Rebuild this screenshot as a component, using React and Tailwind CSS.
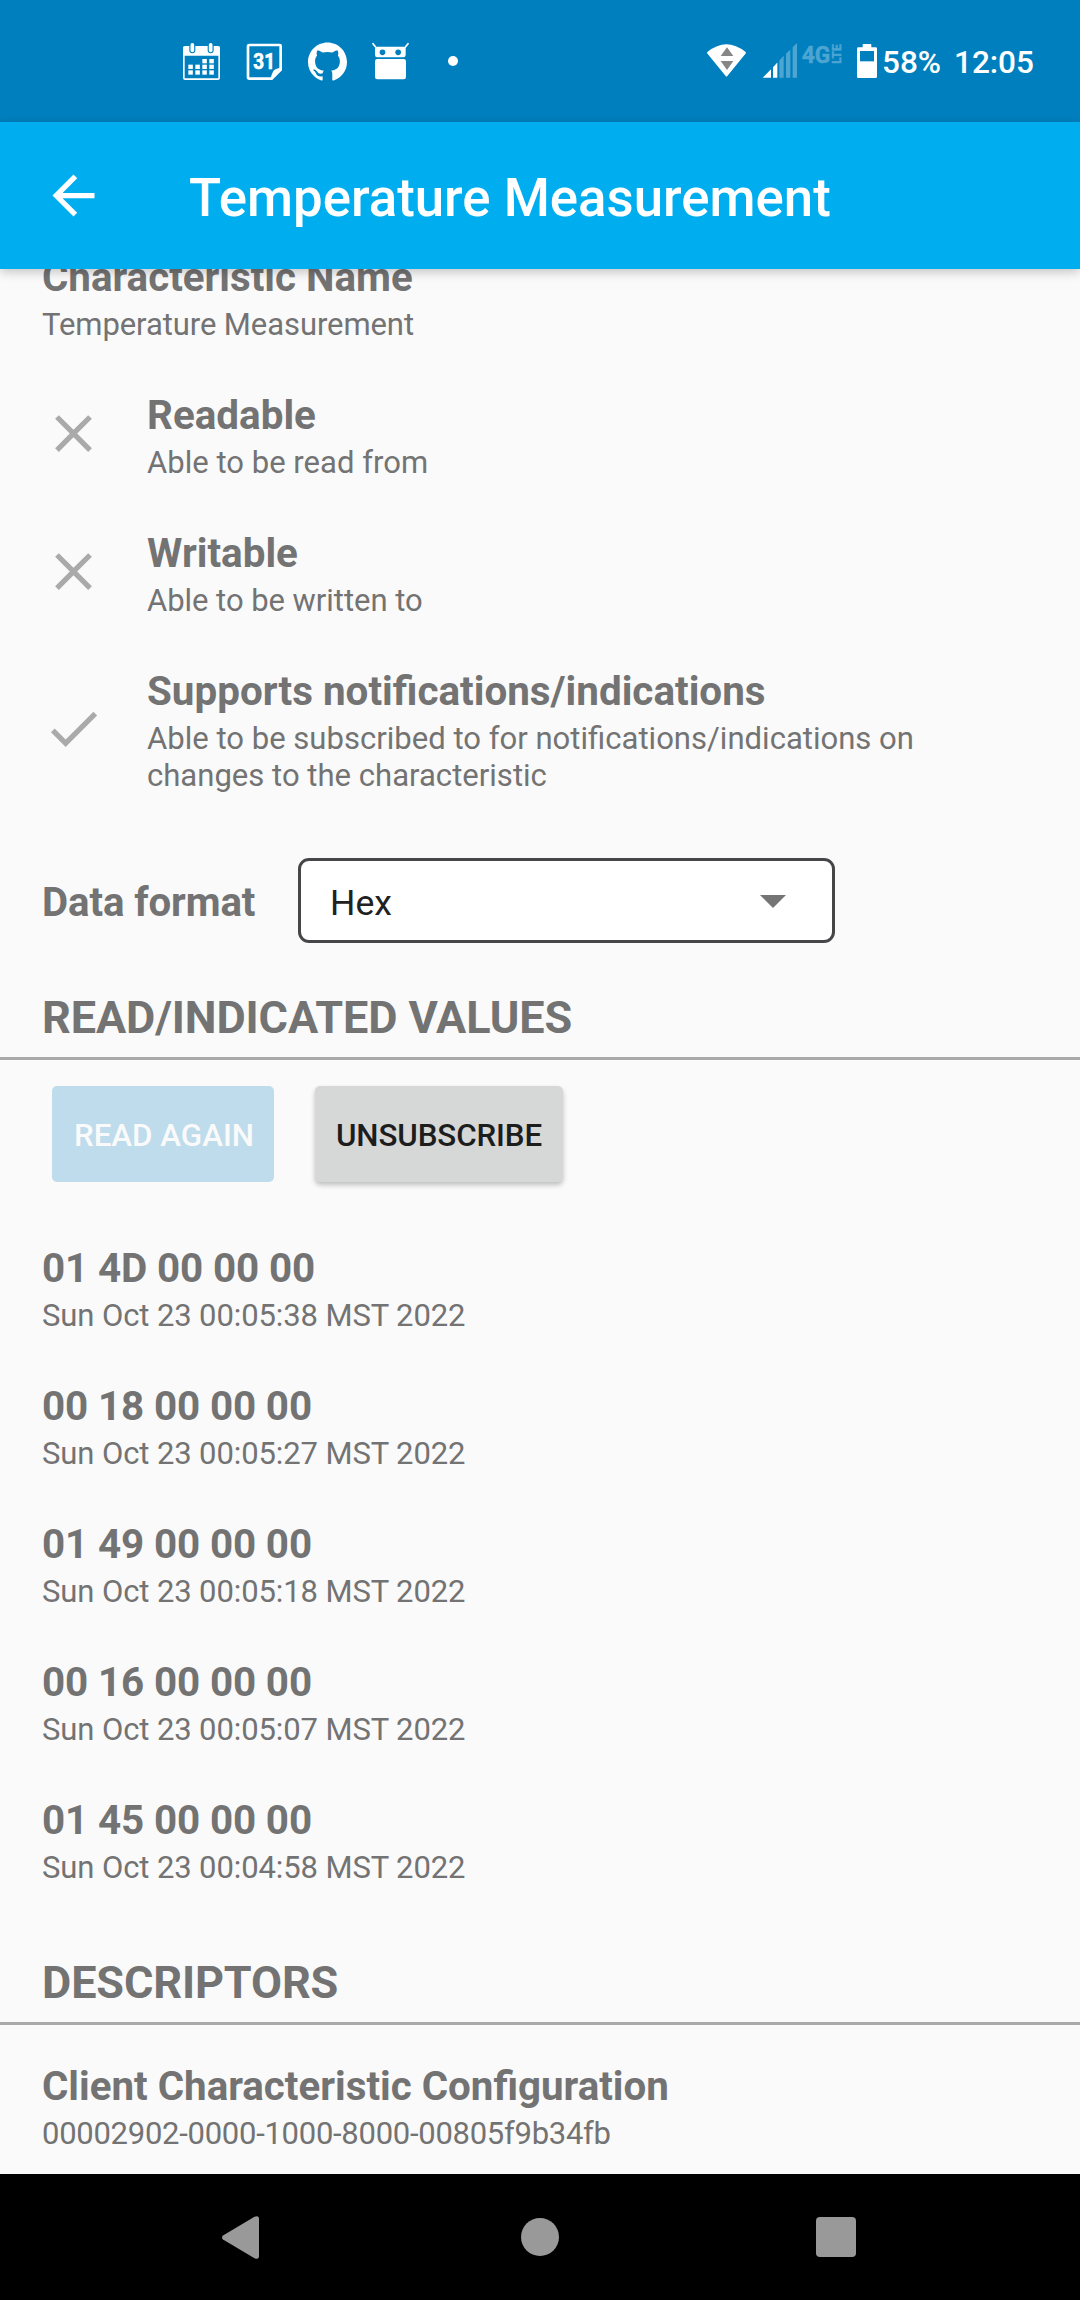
import React from 'react';
import { MdArrowBack, MdCheck, MdClose } from 'react-icons/md';
import { SiGithub } from 'react-icons/si';

const properties = [
  { icon: MdClose, title: 'Readable', text: 'Able to be read from', textClass: 'text-[31px] tracking-[0.03px]' },
  { icon: MdClose, title: 'Writable', text: 'Able to be written to', textClass: 'text-[31px] tracking-[-0.04px]' },
  {
    icon: MdCheck,
    title: 'Supports notifications/indications',
    text: 'Able to be subscribed to for notifications/indications on changes to the characteristic',
    textClass: 'text-[31.07px]',
  },
];

const values = [
  ['01 4D 00 00 00', 'Sun Oct 23 00:05:38 MST 2022'],
  ['00 18 00 00 00', 'Sun Oct 23 00:05:27 MST 2022'],
  ['01 49 00 00 00', 'Sun Oct 23 00:05:18 MST 2022'],
  ['00 16 00 00 00', 'Sun Oct 23 00:05:07 MST 2022'],
  ['01 45 00 00 00', 'Sun Oct 23 00:04:58 MST 2022'],
];

const calendarCells = [
  [127, 117], [148, 117],
  [85, 134], [106, 134], [127, 134], [148, 134],
  [85, 151], [106, 151], [127, 151], [148, 151],
];

function CalendarIcon() {
  return (
    <svg className="h-[38px] w-[37px]" viewBox="69 66 111 114">
      <rect x="71.5" y="80.5" width="106" height="97" rx="4" fill="none" stroke="#fff" strokeWidth="5" />
      <path d="M70 80h109v27H70z" fill="#fff" />
      {[97, 152].map((x) => (
        <g key={x}>
          <rect x={x - 9} y="68" width="18" height="32" rx="9" fill="#007fbe" />
          <rect x={x - 5.5} y="69" width="11" height="28" rx="5.5" fill="#fff" />
        </g>
      ))}
      {calendarCells.map(([x, y]) => (
        <rect key={`${x}-${y}`} x={x} y={y} width="13.5" height="13" fill="#fff" />
      ))}
    </svg>
  );
}

function DateIcon() {
  return (
    <svg className="h-[38px] w-[36px]" viewBox="258 66 108 114">
      <path d="M268 75h91q3 0 3 3v71l-27 27h-67q-4 0-4-4V79q0-4 4-4z" fill="none" stroke="#fff" strokeWidth="8" />
      <path d="M364 143q-20 3-24 10t-9 23l6 2 27-27z" fill="#fff" />
      <text x="280" y="147" textLength="65" lengthAdjust="spacingAndGlyphs" fill="#fff" stroke="#fff" strokeWidth="2" className="font-['Roboto',sans-serif] text-[68px] font-bold">31</text>
    </svg>
  );
}

function RobotIcon() {
  return (
    <svg className="h-[38px] w-[37px]" viewBox="636 66 111 114">
      <path d="M639 71l11 14M744 71l-11 14" stroke="#fff" strokeWidth="5" strokeLinecap="round" />
      <path d="M652 80h78q7 0 7 8v17q0 7-7 7h-78q-7 0-7-7V88q0-8 7-8z" fill="#fff" />
      <circle cx="667.5" cy="97" r="8.5" fill="#007fbe" />
      <circle cx="714.5" cy="97" r="8.5" fill="#007fbe" />
      <rect x="645" y="117" width="93" height="61" rx="7" fill="#fff" />
    </svg>
  );
}

function WifiIcon() {
  return (
    <svg className="h-[38px] w-[39px]" viewBox="51 66 117 114">
      <path d="M53 95.500Q109 50 166 95.500q3 2 1 5L112 168q-3 3-5 0L52 100.500q-2-3 1-5z" fill="#fff" />
      <path d="M92 108h38l-19-26zM92 123h38l-19 27z" fill="#868686" />
    </svg>
  );
}

function SignalIcon() {
  return (
    <svg className="h-[38px] w-[36px]" viewBox="216 66 108 114">
      <path d="M218 173.500l25-26v26zM249 173.500v-32l13-14v46z" fill="#fff" />
      <path d="M268 173.500v-52l13-14v66zM288 173.500v-72l13-13v85zM308 173.500V82l13-13v104.500z" fill="#4da5d2" />
    </svg>
  );
}

function NetworkIcon() {
  return (
    <svg className="h-[38px] w-[41px] overflow-visible" viewBox="333 66 123 114" fill="#4da5d2" stroke="#4da5d2" strokeWidth="1.5">
      <text x="335" y="129" textLength="86" lengthAdjust="spacingAndGlyphs" className="font-['Roboto',sans-serif] text-[74px] font-bold">4G</text>
      <text transform="translate(453 131) rotate(-90)" textLength="58" lengthAdjust="spacingAndGlyphs" className="font-['Roboto',sans-serif] text-[36px] font-bold">LTE</text>
    </svg>
  );
}

function BatteryIcon() {
  return (
    <svg className="h-[38px] w-[22px]" viewBox="498 66 66 114">
      <path d="M520 72h22q2 0 2 2v8h13q4 0 4 4v84q0 4-4 4h-52q-4 0-4-4V86q0-4 4-4h13v-8q0-2 2-2z" fill="#fff" />
      <path d="M510 93h42v31h-42z" fill="#007fbe" />
    </svg>
  );
}

function StatusBar() {
  return (
    <div className="flex h-[122px] shrink-0 items-center bg-[#007fbe] pl-[183px] text-[31.5px] font-medium text-white">
      <div className="flex items-center">
        <CalendarIcon />
        <span className="w-[26px]" />
        <DateIcon />
        <span className="w-[26px]" />
        <SiGithub className="size-[39px]" />
        <span className="w-[25px]" />
        <RobotIcon />
        <span className="ml-[39px] size-[10px] rounded-full bg-white" />
      </div>
      <div className="ml-[249px] flex items-center">
        <WifiIcon />
        <span className="w-[16px]" />
        <SignalIcon />
        <span className="w-[3px]" />
        <NetworkIcon />
        <span className="w-[14px]" />
        <BatteryIcon />
        <span className="ml-[4px] w-[72px] pt-[3px]">58%</span>
        <span className="pt-[3px]">12:05</span>
      </div>
    </div>
  );
}

function AppBar() {
  return (
    <header className="relative z-10 flex h-[147px] shrink-0 items-center gap-[84px] bg-[#00aef0] pl-[42px] text-white shadow-[0_3px_10px_rgba(0,0,0,0.22)]">
      <MdArrowBack className="size-[63px]" />
      <h1 className="pt-[5px] text-[52.8px] leading-none font-medium">Temperature Measurement</h1>
    </header>
  );
}

function Item({ icon: Icon, title, text, titleClass = 'text-[40.4px]', textClass = 'text-[31px]' }) {
  return (
    <div className="flex items-center gap-[42px] px-[42px] py-6">
      {Icon && <Icon className="mb-[5px] size-[63px] shrink-0 text-[#aaaaaa]" />}
      <div className="flex max-w-[800px] flex-col gap-[3px]">
        <div className={`leading-[50px] font-bold ${titleClass}`}>{title}</div>
        <div className={`leading-[37px] ${textClass}`}>{text}</div>
      </div>
    </div>
  );
}

function SectionTitle({ children }) {
  return (
    <h2 className="border-b-[3px] border-[#a9a9a9] px-[42px] pb-3 text-[45px] leading-[54px] font-bold tracking-[-0.12px]">{children}</h2>
  );
}

function NavBar() {
  return (
    <nav className="flex h-[126px] shrink-0 items-center bg-black pl-[222px] text-[#999999]">
      <svg className="h-[43px] w-[37px]" viewBox="0 0 37 43" fill="currentColor">
        <path d="M1 19.500 32.500.8Q37-1 37 3v37q0 4-4.500 2.200L1 23.500q-2-2 0-4z" />
      </svg>
      <span className="ml-[262px] size-[38px] rounded-full bg-[#999999]" />
      <span className="ml-[257px] size-[40px] rounded-[4px] bg-[#999999]" />
    </nav>
  );
}

export default function App() {
  return (
    <div className="flex h-[2300px] w-[1080px] flex-col overflow-hidden bg-[#fafafa] font-['Roboto',sans-serif] text-[#737373]">
      <StatusBar />
      <AppBar />
      <main className="min-h-0 flex-1 overflow-hidden">
        <div className="-mt-10">
          <Item
            title="Characteristic Name"
            text="Temperature Measurement"
            titleClass="text-[40.3px]"
            textClass="text-[31px] tracking-[-0.08px]"
          />
          {properties.map((p) => (
            <Item key={p.title} {...p} />
          ))}
        </div>

        <div className="mt-10 flex items-center pl-[42px]">
          <div className="w-[256px] pt-[5px] text-[40.2px] leading-[48px] font-bold tracking-[-0.1px]">Data format</div>
          <div className="flex h-[85px] w-[537px] items-center justify-between rounded-[11px] border-[3px] border-[#464648] bg-white pr-[46px] pl-[29px]">
            <span className="pt-[6px] text-[35.6px] text-[#212121]">Hex</span>
            <svg className="mt-px h-[13px] w-[26px]" viewBox="0 0 26 13">
              <path d="M0 0h26L13 13z" fill="#757575" />
            </svg>
          </div>
        </div>

        <section className="mt-12">
          <SectionTitle>READ/INDICATED VALUES</SectionTitle>
          <div className="mt-[26px] mb-[38px] flex gap-[41px] pl-[52px] text-[31.3px] font-medium">
            <button className="h-[96px] w-[222px] rounded-[5px] bg-[#bfdcec] pt-[4px] pl-[2px] text-[#fafafa]">READ AGAIN</button>
            <button className="h-[96px] w-[248px] rounded-[5px] bg-[#d6d8d7] pt-[4px] tracking-[-0.1px] text-[#1d1d1d] shadow-[0_3px_5px_rgba(0,0,0,0.24)]">UNSUBSCRIBE</button>
          </div>
          {values.map(([value, time]) => (
            <Item
              key={time}
              title={value}
              text={time}
              titleClass="text-[40.4px] tracking-[-0.14px]"
              textClass="text-[31px] tracking-[-0.1px]"
            />
          ))}
        </section>

        <section className="mt-[46px]">
          <SectionTitle>DESCRIPTORS</SectionTitle>
          <div className="mt-[13px]">
            <Item
              title="Client Characteristic Configuration"
              text="00002902-0000-1000-8000-00805f9b34fb"
              titleClass="text-[40.3px]"
              textClass="text-[31px] tracking-[-0.27px]"
            />
          </div>
        </section>
      </main>
      <NavBar />
    </div>
  );
}
